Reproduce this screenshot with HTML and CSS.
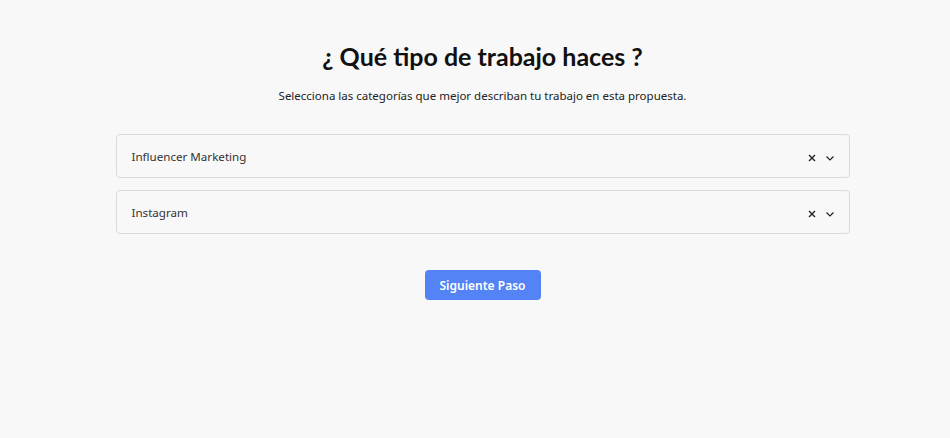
FILE: index.html
```html
<!DOCTYPE html>
<html lang="es">
<head>
    <meta charset="UTF-8">
    <title>Tipo de trabajo</title>
    <link rel="stylesheet" href="styles.css">
</head>
<body>
    <div class="container">
        <h1>¿ Qué tipo de trabajo haces ?</h1>
        <p class="subtitle">Selecciona las categorías que mejor describan tu trabajo en esta propuesta.</p>

        <div class="select">
            <span class="select-value">Influencer Marketing</span>
            <div class="select-icons">
                <svg class="icon" viewBox="0 0 10 10" width="10" height="10"><path d="M2 2 L8 8 M8 2 L2 8" stroke="#222" stroke-width="1.4" fill="none"/></svg>
                <svg class="icon" viewBox="0 0 10 10" width="10" height="10"><path d="M1.5 3.5 L5 7 L8.5 3.5" stroke="#222" stroke-width="1.2" fill="none"/></svg>
            </div>
        </div>

        <div class="select">
            <span class="select-value">Instagram</span>
            <div class="select-icons">
                <svg class="icon" viewBox="0 0 10 10" width="10" height="10"><path d="M2 2 L8 8 M8 2 L2 8" stroke="#222" stroke-width="1.4" fill="none"/></svg>
                <svg class="icon" viewBox="0 0 10 10" width="10" height="10"><path d="M1.5 3.5 L5 7 L8.5 3.5" stroke="#222" stroke-width="1.2" fill="none"/></svg>
            </div>
        </div>

        <button class="button">Siguiente Paso</button>
    </div>
</body>
</html>
```
FILE: styles.css
```css
body {
    font-family: "Noto Sans", "Open Sans", sans-serif;
    background-color: #f8f8f8;
    margin: 0;
    padding-left: 15px;
    color: #222;
}

.container {
    width: 734px;
    margin: 0 auto;
    padding-top: 38px;
    display: flex;
    flex-direction: column;
    align-items: stretch;
}

h1 {
    font-family: "Lato", sans-serif;
    font-size: 25px;
    font-weight: 700;
    text-align: center;
    color: #111;
    margin: 0;
    line-height: 36px;
}

.subtitle {
    font-size: 11.5px;
    text-align: center;
    margin: 14px 0 31px;
    color: #222;
}

.select {
    display: flex;
    align-items: center;
    justify-content: space-between;
    height: 42px;
    border: 1px solid #d9d9de;
    border-radius: 4px;
    padding: 0 14px 0 15px;
    margin-bottom: 12px;
}

.select-value {
    font-size: 11.6px;
    color: #333;
}

.select-icons {
    display: flex;
    gap: 8px;
    align-items: center;
    padding-top: 3px;
}

.button {
    align-self: center;
    margin-top: 24px;
    width: 116px;
    height: 30px;
    border: none;
    border-radius: 4px;
    background-color: #5483f5;
    color: #fff;
    font-family: "Noto Sans", sans-serif;
    font-size: 12px;
    font-weight: 600;
    cursor: pointer;
}
```
